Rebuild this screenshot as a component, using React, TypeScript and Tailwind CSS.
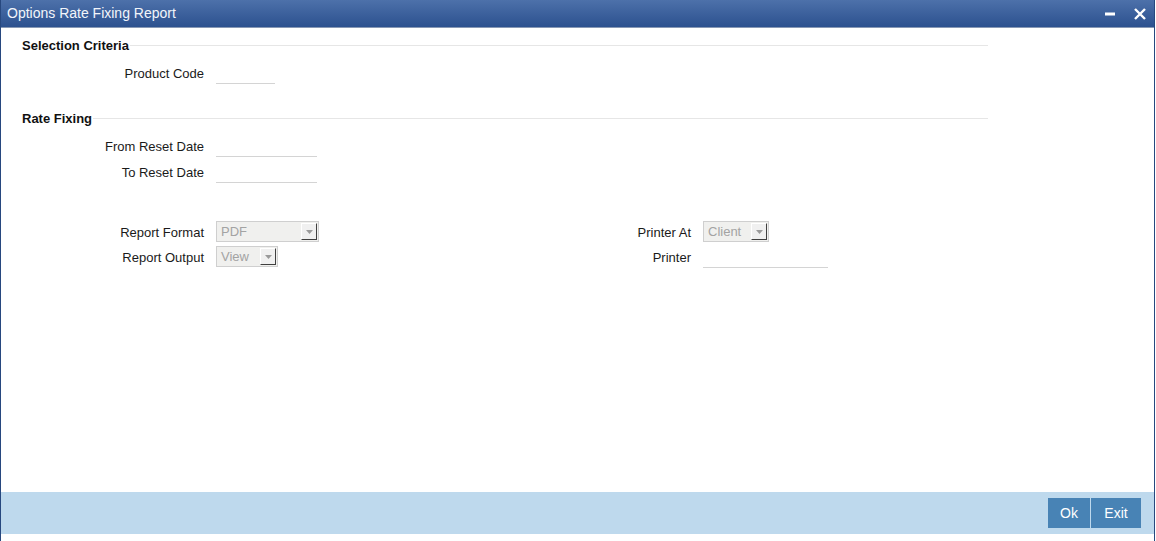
import React from 'react'

const FONT = { fontFamily: '"Liberation Sans", Arial, sans-serif' }

function Label({ children }: { children: React.ReactNode }) {
  return <div className="w-[203px] shrink-0 text-right text-[13px] text-[#1a1a1a]">{children}</div>
}

function TextField({ w }: { w: string }) {
  return <div className={`${w} h-[21px] border-b border-[#d4d4d4]`} />
}

function SelectBox({ value, w }: { value: string; w: string }) {
  return (
    <div className={`${w} h-[21px] -mt-[2px] flex items-center justify-between border border-[#cfcfcf] bg-[#f0f0ee] pl-[4px] pr-[1px]`}>
      <span className="text-[13px] text-[#a3a3a3] leading-none">{value}</span>
      <span className="w-[16px] h-[17px] flex items-center justify-center border-t border-l border-t-white border-l-white border-r border-b border-r-[#404040] border-b-[#404040] bg-[#f0f0f0]">
        <svg width="7" height="4" viewBox="0 0 7 4"><path d="M0 0h7L3.5 4z" fill="#9a9a9a" /></svg>
      </span>
    </div>
  )
}

function Heading({ children }: { children: React.ReactNode }) {
  return (
    <div className="flex items-center h-[16px] w-[987px] pl-[21px]">
      <span className="text-[13px] font-bold text-[#111] leading-none pr-[1px]">{children}</span>
      <div className="flex-1 border-t border-[#e6e6e6]" />
    </div>
  )
}

export default function App() {
  return (
    <div className="w-[1156px] h-[541px] bg-white overflow-hidden" style={FONT}>
      <div className="w-[1155px] h-[541px] flex flex-col border-l border-r border-[#27487f]">
        <header className="h-[28px] shrink-0 flex items-center justify-between bg-gradient-to-b from-[#4d71aa] to-[#2c518f] border-b border-[#8798b4] pl-[6px] pr-[8px]">
          <span className="text-[14px] text-[#f2f5fa]">Options Rate Fixing Report</span>
          <div className="flex items-center gap-[19px]">
            <svg width="10" height="4" viewBox="0 0 10 4"><rect x="0" y="0.5" width="10" height="3" fill="#fff" /></svg>
            <svg width="12" height="12" viewBox="0 0 12 12"><path d="M1 1L11 11M11 1L1 11" stroke="#fff" strokeWidth="2.4" /></svg>
          </div>
        </header>

        <main className="flex-1 flex flex-col">
          <div className="mt-[9px]"><Heading>Selection Criteria</Heading></div>
          <div className="mt-[10px] flex items-center gap-[12px] h-[21px]">
            <Label>Product Code</Label>
            <TextField w="w-[59px]" />
          </div>

          <div className="mt-[26px]"><Heading>Rate Fixing</Heading></div>
          <div className="mt-[10px] flex items-center gap-[12px] h-[21px]">
            <Label>From Reset Date</Label>
            <TextField w="w-[101px]" />
          </div>
          <div className="mt-[5px] flex items-center gap-[12px] h-[21px]">
            <Label>To Reset Date</Label>
            <TextField w="w-[101px]" />
          </div>

          <div className="mt-[39px] grid grid-cols-[487px_1fr] gap-y-[4px]">
            <div className="flex items-center gap-[12px] h-[21px]">
              <Label>Report Format</Label>
              <SelectBox value="PDF" w="w-[103px]" />
            </div>
            <div className="flex items-center gap-[12px] h-[21px]">
              <Label>Printer At</Label>
              <SelectBox value="Client" w="w-[66px]" />
            </div>
            <div className="flex items-center gap-[12px] h-[21px]">
              <Label>Report Output</Label>
              <SelectBox value="View" w="w-[62px]" />
            </div>
            <div className="flex items-center gap-[12px] h-[21px]">
              <Label>Printer</Label>
              <TextField w="w-[125px]" />
            </div>
          </div>
        </main>

        <footer className="h-[42px] shrink-0 mb-[7px] bg-[#bed9ed] flex items-center justify-end pr-[13px]">
          <div className="flex gap-[1px]">
            <button className="w-[42px] h-[30px] bg-[#4883b5] text-white text-[14px]">Ok</button>
            <button className="w-[50px] h-[30px] bg-[#4883b5] text-white text-[14px]">Exit</button>
          </div>
        </footer>
      </div>
    </div>
  )
}
